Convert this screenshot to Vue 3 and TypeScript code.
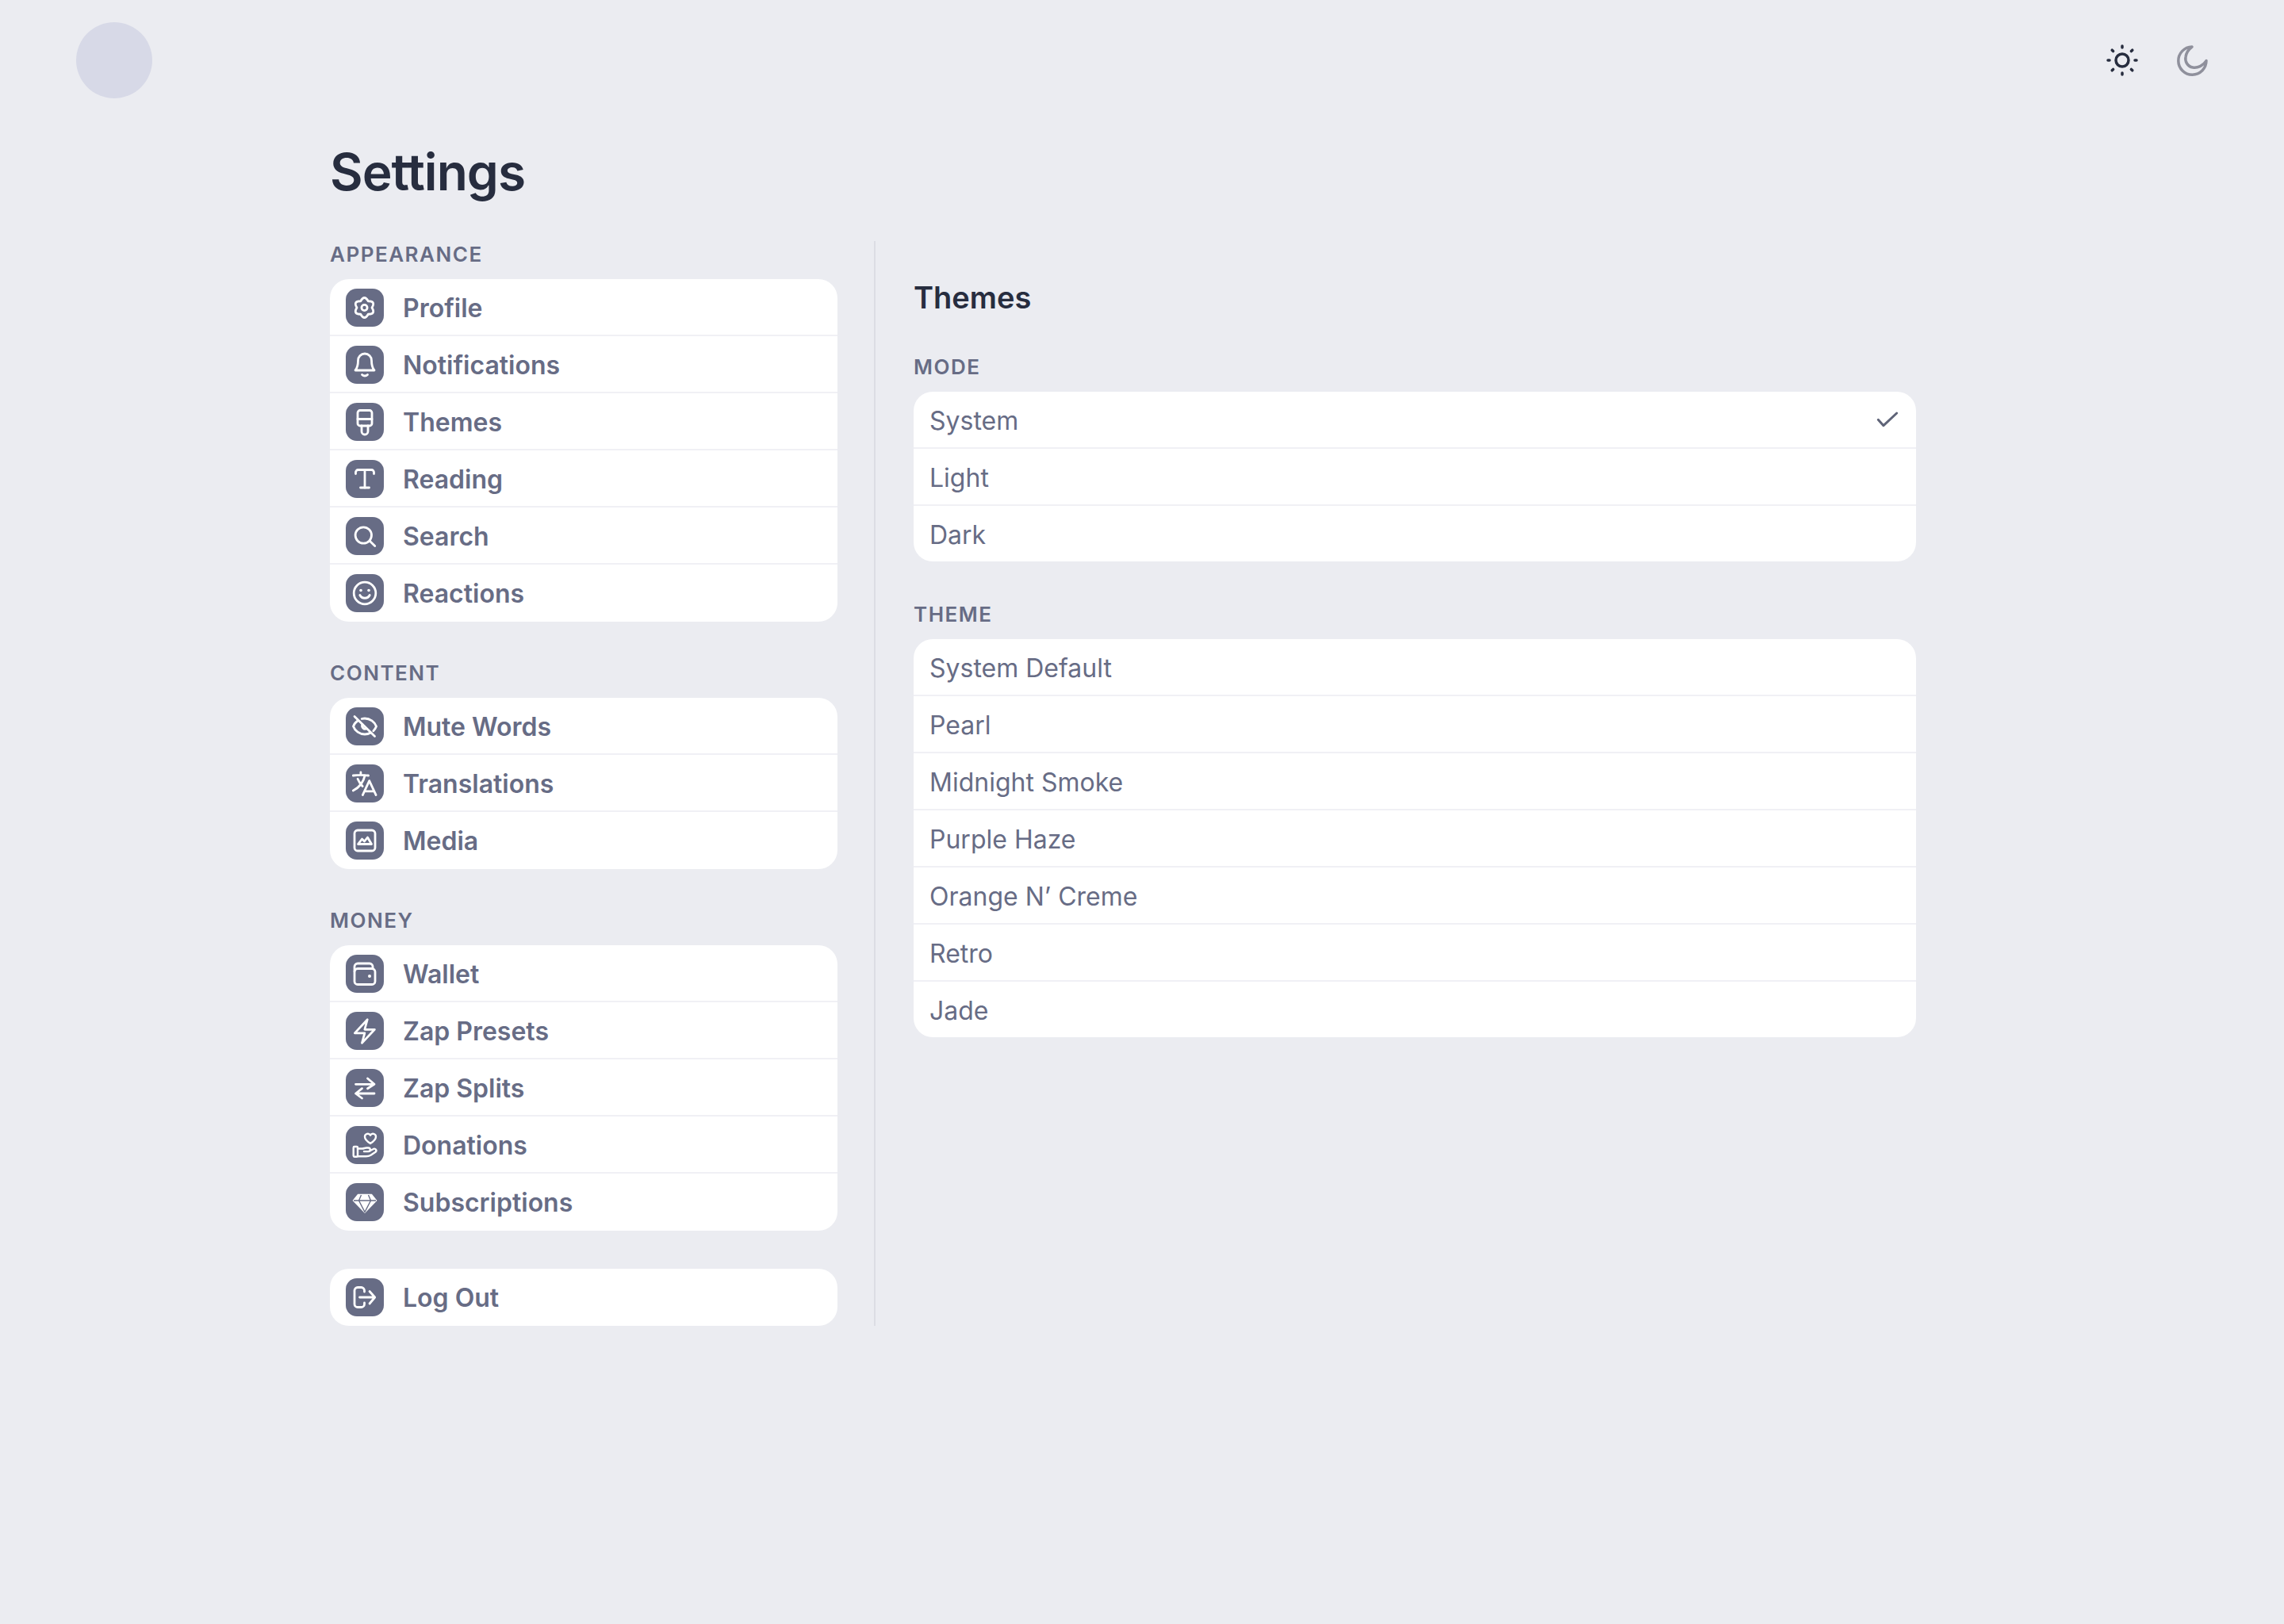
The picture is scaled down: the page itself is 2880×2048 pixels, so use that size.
<script setup lang="ts">
interface Item { label: string; icon: string }
interface Group { title?: string; items: Item[] }

const icons: Record<string, string> = {
  gear: '<path d="M28.250 15.770Q38.050 15.600 33 24Q38.050 32.400 28.250 32.230Q23.500 40.800 18.750 32.230Q8.950 32.400 14 24Q8.950 15.600 18.750 15.770Q23.500 7.200 28.250 15.770z"/><circle cx="23.500" cy="24" r="3.600"/>',
  bell: '<path d="M24 10a8.500 8.500 0 0 0-8.500 8.500c0 6-.5 9-3.500 12.500h24c-3-3.500-3.500-6.500-3.500-12.500A8.500 8.500 0 0 0 24 10z"/><path d="M20.500 36.500c2 2 5 2 7 0"/>',
  brush: '<rect x="15" y="9.500" width="18" height="19.500" rx="3"/><path d="M15 20.500h18"/><path d="M20 29v7a4 4 0 0 0 8 0v-7"/>',
  type: '<path d="M12.500 17.500v-2a3 3 0 0 1 3-3h17a3 3 0 0 1 3 3v2"/><path d="M24 12.500V35"/><path d="M18.500 35h11"/>',
  search: '<circle cx="22.300" cy="23" r="10.200"/><path d="M30.500 30.500l6.200 6"/>',
  smile: '<circle cx="24" cy="24" r="13.800"/><path d="M17.800 26.500a7 7 0 0 0 12.400 0"/><circle cx="19" cy="20.500" r="1.800" fill="#fff" stroke="none"/><circle cx="29" cy="20.500" r="1.800" fill="#fff" stroke="none"/>',
  eyeoff: '<path d="M11 11.500l25.500 25"/><path d="M15 17c-2.600 1.800-4.600 4.200-5.500 7 2 5.600 8 10 14.500 10 2.700 0 5.200-.7 7.400-2"/><path d="M20.200 14.500c1.200-.3 2.500-.5 3.800-.5 6.500 0 12.500 4.400 14.500 10-.8 2.200-2 4.100-3.700 5.700"/><path d="M21 21.500a4 4 0 0 0 5 5.500"/>',
  lang: '<g transform="translate(4.500 5) scale(1.600)" stroke-width="1.750"><path d="M10.500 21l5.250-11.250L21 21m-9-3h7.500M3 5.621a48.474 48.474 0 0 1 6-.371m0 0c1.120 0 2.233.038 3.334.114M9 5.250V3m3.334 2.364C11.176 10.658 7.690 15.080 3 17.502m9.334-12.138c.896.061 1.785.147 2.666.257m-4.589 8.495a18.023 18.023 0 0 1-3.827-5.802"/></g>',
  media: '<rect x="11" y="11" width="26" height="26" rx="4"/><path d="M15.500 28.500l5-6.500 3 3 4-5 5 8.500z"/>',
  wallet: '<rect x="11" y="17.500" width="26" height="20" rx="4"/><path d="M11 21v-6a4 4 0 0 1 4-4h15a4 4 0 0 1 4 4v2.500"/><circle cx="30" cy="27" r="2" fill="#fff" stroke="none"/>',
  bolt: '<g transform="translate(5.600 6.300) scale(1.520)" stroke-width="1.800"><path d="M3.750 13.500l10.500-11.250L12 10.500h8.250L9.750 21.750 12 13.500H3.750z"/></g>',
  swap: '<path d="M12.500 19.300H36l-8.500-7.300M36 19.300l-8.500 5.400"/><path d="M36 31H12.500l8-6.300M12.500 31l8 6"/>',
  hand: '<g stroke-width="2.400"><path d="M31 22c-4-2.500-7-5.500-7-8.500a3.700 3.700 0 0 1 7-1.700 3.700 3.700 0 0 1 7 1.700c0 3-3 6-7 8.500z"/><rect x="9.700" y="26" width="5.300" height="12.700" rx="1.200"/><path d="M15 28.500h6c2 0 3-1 5-1h2.500a2.300 2.300 0 0 1 0 4.600H23"/><path d="M31 31l3.500-1.800a2.300 2.300 0 0 1 3 3.600l-6 4c-2 1.200-4 1.500-6 1.500H15"/></g>',
  gem: '<path d="M15.500 14.500h17l6 7.500L24 37 9.500 22z" fill="#fff" stroke-width="1.500"/><g stroke="#676c85" stroke-width="1.400" stroke-linecap="butt"><path d="M10 22h28M19.500 15l-3 7L24 36.500 31.500 22l-3-7"/></g>',
  logout: '<path d="M23.500 17v-1.500a4 4 0 0 0-4-4H15a4 4 0 0 0-4 4v17a4 4 0 0 0 4 4h4.500a4 4 0 0 0 4-4V31"/><path d="M17.500 24h19M30 16.500l6.700 7.500-6.700 8"/>'
}

const groups: Group[] = [
  { title: 'APPEARANCE', items: [
    { label: 'Profile', icon: 'gear' }, { label: 'Notifications', icon: 'bell' },
    { label: 'Themes', icon: 'brush' }, { label: 'Reading', icon: 'type' },
    { label: 'Search', icon: 'search' }, { label: 'Reactions', icon: 'smile' }
  ] },
  { title: 'CONTENT', items: [
    { label: 'Mute Words', icon: 'eyeoff' }, { label: 'Translations', icon: 'lang' },
    { label: 'Media', icon: 'media' }
  ] },
  { title: 'MONEY', items: [
    { label: 'Wallet', icon: 'wallet' }, { label: 'Zap Presets', icon: 'bolt' },
    { label: 'Zap Splits', icon: 'swap' }, { label: 'Donations', icon: 'hand' },
    { label: 'Subscriptions', icon: 'gem' }
  ] },
  { items: [{ label: 'Log Out', icon: 'logout' }] }
]

const modes = ['System', 'Light', 'Dark']
const themes = ['System Default', 'Pearl', 'Midnight Smoke', 'Purple Haze', 'Orange N’ Creme', 'Retro', 'Jade']
</script>

<template>
  <div class="page">
    <header class="top">
      <div class="avatar"></div>
      <div class="modes">
        <svg class="sun" width="48" height="48" viewBox="0 0 24 24" fill="none" stroke="currentColor" stroke-width="1.750" stroke-linecap="round" stroke-linejoin="round">
          <path d="M12 12m-4 0a4 4 0 1 0 8 0a4 4 0 1 0-8 0M3 12h1m8-9v1m8 8h1m-9 8v1m-6.400-15.400l.7.7m12.100-.7l-.7.7m0 11.400l.7.7m-12.100-.7l-.7.7"/>
        </svg>
        <svg class="moon" width="48" height="48" viewBox="0 0 24 24" fill="none" stroke="currentColor" stroke-width="1.750" stroke-linecap="round" stroke-linejoin="round">
          <path d="M12 3.500A8.800 8.800 0 1 0 21 12.300C19 15.500 15.500 17 12.500 16.500 9 16 7.500 12.500 8 10 8.300 7.500 10 5 12 3.500z"/>
        </svg>
      </div>
    </header>

    <main class="main">
      <h1 class="title">Settings</h1>
      <div class="columns">
        <nav class="side">
          <section v-for="(g, i) in groups" :key="i" class="group">
            <div v-if="g.title" class="label">{{ g.title }}</div>
            <ul class="card">
              <li v-for="item in g.items" :key="item.label" class="row nav-row">
                <span class="tile">
                  <svg width="48" height="48" viewBox="0 0 48 48" fill="none" stroke="#fff" stroke-width="2.800" stroke-linecap="round" stroke-linejoin="round" v-html="icons[item.icon]"></svg>
                </span>
                <span class="nav-text">{{ item.label }}</span>
              </li>
            </ul>
          </section>
        </nav>

        <section class="detail">
          <h2 class="subtitle">Themes</h2>
          <div class="group">
            <div class="label">MODE</div>
            <ul class="card">
              <li v-for="(m, i) in modes" :key="m" class="row opt-row">
                <span>{{ m }}</span>
                <svg v-if="i === 0" class="check" width="32" height="32" viewBox="0 0 32 32" fill="none" stroke="currentColor" stroke-width="3" stroke-linecap="round" stroke-linejoin="round">
                  <path d="M4.300 16.300l6.700 7.400L27.700 8"/>
                </svg>
              </li>
            </ul>
          </div>
          <div class="group">
            <div class="label">THEME</div>
            <ul class="card">
              <li v-for="t in themes" :key="t" class="row opt-row"><span>{{ t }}</span></li>
            </ul>
          </div>
        </section>
      </div>
    </main>
  </div>
</template>

<style>
html, body { background: #ebecf1; }
</style>

<style scoped>
.page {
  min-height: 2048px;
  background: #ebecf1;
  font-family: Inter, "Liberation Sans", sans-serif;
  color: #676c85;
}
.top {
  height: 152px;
  box-sizing: border-box;
  padding: 28px 92px 28px 96px;
  display: flex;
  justify-content: space-between;
  align-items: center;
}
.avatar { width: 96px; height: 96px; border-radius: 50%; background: #d7d9e7; }
.modes { display: flex; gap: 40px; }
.sun { color: #272d3f; }
.moon { color: #8f909c; }
.main { padding: 25px 464px 0 416px; }
.title {
  margin: 0 0 47px;
  font-size: 64px;
  line-height: 80px;
  font-weight: 600;
  letter-spacing: -0.95px;
  color: #272d3f;
}
.columns { display: flex; }
.side { width: 640px; flex: none; margin-right: 46px; }
.detail {
  flex: 1;
  border-left: 2px solid #dcdde4;
  padding: 46px 0 0 48px;
}
.subtitle {
  margin: 0 0 48px;
  padding-top: 1px;
  height: 47px;
  font-size: 38px;
  line-height: 48px;
  font-weight: 600;
  color: #272d3f;
}
.group { margin-bottom: 48px; }
.group:last-child { margin-bottom: 0; }
.detail .group { margin-bottom: 50px; }
.label {
  font-size: 26px;
  line-height: 34px;
  margin-bottom: 14px;
  font-weight: 600;
  letter-spacing: 1.500px;
  color: #676c85;
}
.card {
  list-style: none;
  margin: 0;
  padding: 0;
  background: #fff;
  border-radius: 24px;
  overflow: hidden;
}
.row {
  box-sizing: border-box;
  display: flex;
  align-items: center;
}
.row:not(:last-child) { border-bottom: 2px solid #f0f0f5; }
.nav-row {
  padding: 12px 20px 10px;
  gap: 24px;
  font-weight: 600;
  font-size: 32px;
}
.nav-row:last-child { padding-bottom: 12px; }
.tile {
  width: 48px;
  height: 48px;
  flex: none;
  background: #676c85;
  border-radius: 14px;
  display: block;
}
.tile svg { display: block; }
.opt-row {
  height: 72px;
  padding: 2px 20px 0;
  justify-content: space-between;
  font-weight: 400;
  font-size: 32px;
}
.opt-row:last-child { height: 70px; }
.opt-row .check { margin-top: -2px; }
.check { color: #5f6478; }
</style>
